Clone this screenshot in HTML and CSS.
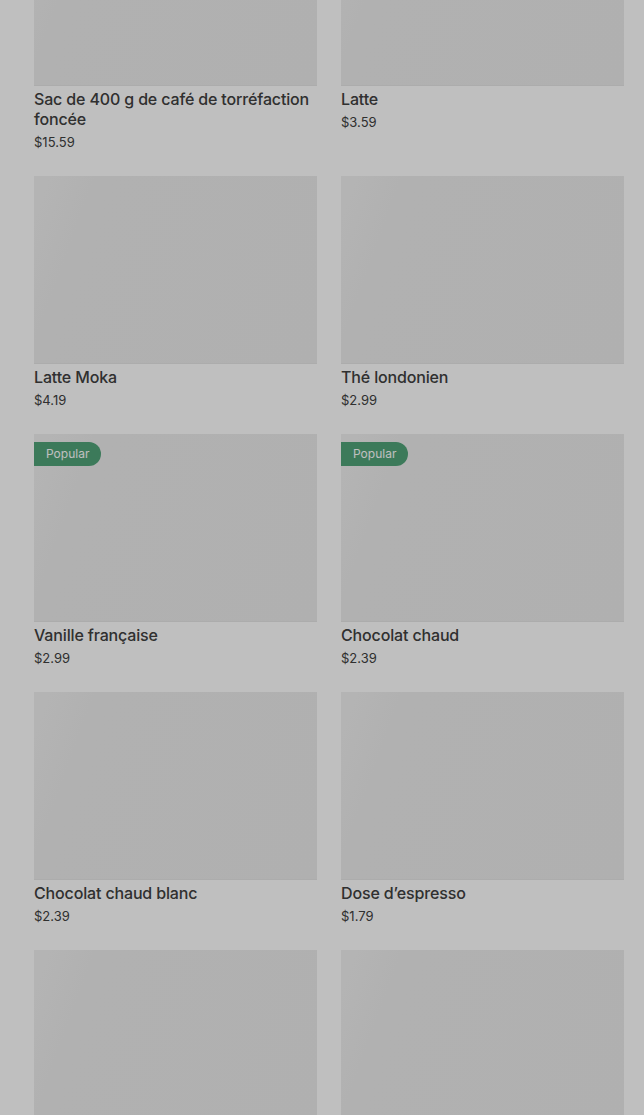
FILE: index.html
```html
<!DOCTYPE html>
<html lang="fr">
<head>
  <meta charset="UTF-8">
  <meta name="viewport" content="width=device-width, initial-scale=1.0">
  <title>Menu</title>
  <link rel="stylesheet" href="styles.css">
</head>
<body>
  <main class="menu">
    <div class="product-grid">
      <div class="product">
        <div class="product-image"></div>
        <div class="product-name">Sac de 400 g de café de torréfaction foncée</div>
        <div class="product-price">$15.59</div>
      </div>
      <div class="product">
        <div class="product-image"></div>
        <div class="product-name">Latte</div>
        <div class="product-price">$3.59</div>
      </div>
      <div class="product">
        <div class="product-image"></div>
        <div class="product-name">Latte Moka</div>
        <div class="product-price">$4.19</div>
      </div>
      <div class="product">
        <div class="product-image"></div>
        <div class="product-name">Thé londonien</div>
        <div class="product-price">$2.99</div>
      </div>
      <div class="product">
        <div class="product-image"><span class="badge">Popular</span></div>
        <div class="product-name">Vanille française</div>
        <div class="product-price">$2.99</div>
      </div>
      <div class="product">
        <div class="product-image"><span class="badge">Popular</span></div>
        <div class="product-name">Chocolat chaud</div>
        <div class="product-price">$2.39</div>
      </div>
      <div class="product">
        <div class="product-image"></div>
        <div class="product-name">Chocolat chaud blanc</div>
        <div class="product-price">$2.39</div>
      </div>
      <div class="product">
        <div class="product-image"></div>
        <div class="product-name">Dose d’espresso</div>
        <div class="product-price">$1.79</div>
      </div>
      <div class="product">
        <div class="product-image"></div>
      </div>
      <div class="product">
        <div class="product-image"></div>
      </div>
    </div>
  </main>
  <div class="backdrop"></div>
</body>
</html>
```

FILE: styles.css
```css
body {
  margin: 0;
  background: #ffffff;
  color: #404040;
  font-family: 'Inter', 'Roboto', sans-serif;
  overflow: hidden;
}

.menu {
  padding: 0 20px 0 34px;
}

.product-grid {
  margin-top: -102px;
  display: grid;
  grid-template-columns: 1fr 1fr;
  column-gap: 24px;
  row-gap: 25px;
}

.product-image {
  position: relative;
  height: 188px;
  background: linear-gradient(110deg, #f1f1f1 0%, #ececec 22%, #ebebeb 100%);
  border-bottom: 1px solid #e6e6e6;
  box-sizing: border-box;
}

.badge {
  position: absolute;
  top: 8px;
  left: 0;
  height: 24px;
  padding: 0 12px;
  line-height: 24px;
  font-size: 12px;
  color: #ffffff;
  background: #51a379;
  border-radius: 0 12px 12px 0;
}

.product-name {
  margin-top: 3px;
  font-size: 16px;
  font-weight: 500;
  line-height: 20px;
  letter-spacing: -0.15px;
}

.product-price {
  margin-top: 4px;
  font-size: 13px;
  line-height: 18px;
}

/* voile du modal */
.backdrop {
  position: fixed;
  inset: 0;
  background: rgba(0, 0, 0, 0.25);
}
```
